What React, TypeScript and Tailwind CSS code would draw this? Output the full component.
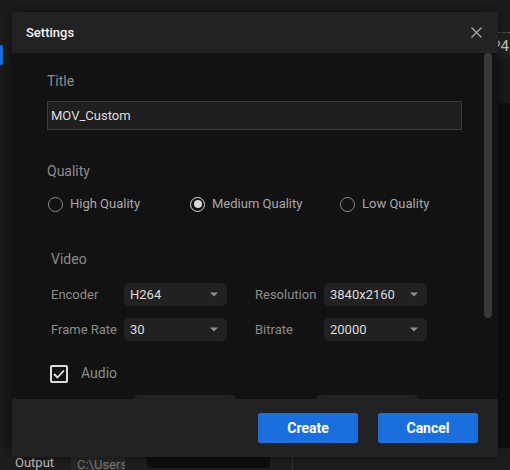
import React from 'react';

const font = { fontFamily: 'Roboto, "Liberation Sans", sans-serif' };

function Select({ value }: { value: string }) {
  return (
    <div className="flex h-[23px] w-[103px] items-center justify-between rounded-[5px] bg-[#212121] pl-[6px] pr-[9px]">
      <span className="text-[13px] text-[#dcdcdc]">{value}</span>
      <svg width="8" height="5" viewBox="0 0 8 5">
        <path d="M0 0.5 L8 0.5 L4 4.5 Z" fill="#8e8e8e" />
      </svg>
    </div>
  );
}

function Radio({ label, checked }: { label: string; checked?: boolean }) {
  return (
    <div className="flex items-center gap-[7px]">
      <span
        className={`flex h-[15px] w-[15px] items-center justify-center rounded-full border-[1.5px] ${
          checked ? 'border-[#d8d8d8]' : 'border-[#8a8a8a]'
        }`}
      >
        {checked && <span className="h-[8px] w-[8px] rounded-full bg-[#d8d8d8]" />}
      </span>
      <span className="text-[13px] text-[#a8a8a8]">{label}</span>
    </div>
  );
}

function Field({ label, value, labelW }: { label: string; value: string; labelW: string }) {
  return (
    <div className="flex items-center">
      <span className={`${labelW} text-[13px] text-[#8c8c8c]`}>{label}</span>
      <Select value={value} />
    </div>
  );
}

export default function App() {
  return (
    <div className="relative h-[470px] w-[510px] overflow-hidden bg-[#1c1c1c]" style={font}>
      {/* background app */}
      <div className="flex h-full flex-col">
        <div className="flex h-[448px]">
          <div className="flex w-[12px] flex-col">
            <div className="h-[45px]" />
            <div className="h-[20px] w-[3px] rounded-r-[2px] bg-[#1a6fdf]" />
            <div className="flex-1 bg-[#1a1a1a]" />
          </div>
          <div className="flex-1" />
          <div className="flex w-[12px] flex-col">
            <div className="h-[32px]" />
            <div className="flex h-[25px] justify-end border-t border-dashed border-[#555] bg-[#222] pr-[1px] pt-[6px] text-[15px] leading-none whitespace-nowrap text-[#c8c8c8]">
              MP4
            </div>
            <div className="h-[46px] bg-[#1a1a1a]" />
            <div className="flex-1 bg-[#0f0f0f]" />
          </div>
        </div>
        <div className="flex h-[22px] items-end bg-[#1e1e1e] text-[13px]">
          <span className="ml-[15px] mb-[-2px] w-[56px] text-[#c4c4c4]">Output</span>
          <div className="h-[13px] w-[54px] overflow-hidden whitespace-nowrap bg-[#282828] pl-[6px] leading-[15px] text-[#7e7e7e]">
            C:\Users
          </div>
          <div className="ml-[22px] mb-[2px] h-[11px] w-[123px] rounded-b-[4px] bg-[#0e0e0e]" />
          <div className="ml-[22px] h-[13px] w-px bg-[#333]" />
        </div>
      </div>

      {/* dialog */}
      <div className="absolute left-[12px] top-[12px] flex w-[486px] flex-col shadow-[0_0_12px_rgba(0,0,0,0.5)]">
        <div className="flex h-[41px] items-center justify-between bg-[#222] pl-[14px] pr-[16px]">
          <span className="text-[13px] font-medium text-[#f2f2f2]">Settings</span>
          <svg width="11" height="11" viewBox="0 0 11 11">
            <path d="M0.5 0.5 L10.5 10.5 M10.5 0.5 L0.5 10.5" stroke="#a8a8a8" strokeWidth="1.3" />
          </svg>
        </div>

        <div className="relative h-[346px] overflow-hidden bg-[#121212] pl-[35px]">
          <div className="absolute right-[6px] top-0 h-[265px] w-[8px] rounded-full bg-[#383838]" />

          <div className="pt-[18px] text-[14px] leading-[20px] text-[#8c8c8c]">Title</div>
          <div className="mt-[10px] flex h-[29px] w-[415px] items-center border border-[#3a3a3a] bg-[#1f1f1f] pl-[3px] text-[13px] text-[#dedede]">
            MOV_Custom
          </div>

          <div className="mt-[31px] text-[14px] leading-[20px] text-[#8c8c8c]">Quality</div>
          <div className="mt-[13px] flex h-[20px] items-center pl-[1px]">
            <div className="w-[142px]">
              <Radio label="High Quality" />
            </div>
            <div className="w-[150px]">
              <Radio label="Medium Quality" checked />
            </div>
            <Radio label="Low Quality" />
          </div>

          <div className="mt-[35px] pl-[4px] text-[14px] leading-[20px] text-[#8c8c8c]">Video</div>
          <div className="mt-[14px] flex flex-col gap-[12px] pl-[4px]">
            <div className="flex">
              <Field label="Encoder" value="H264" labelW="w-[73px]" />
              <div className="ml-[28px]">
                <Field label="Resolution" value="3840x2160" labelW="w-[69px]" />
              </div>
            </div>
            <div className="flex">
              <Field label="Frame Rate" value="30" labelW="w-[73px]" />
              <div className="ml-[28px]">
                <Field label="Bitrate" value="20000" labelW="w-[69px]" />
              </div>
            </div>
          </div>

          <div className="mt-[24px] flex h-[18px] items-center pl-[3px]">
            <span className="flex h-[18px] w-[18px] items-center justify-center rounded-[2px] border-2 border-[#dcdcdc]">
              <svg width="12" height="10" viewBox="0 0 12 10">
                <path d="M1 5 L4.5 8.5 L11 1.5" stroke="#e6e6e6" strokeWidth="1.8" fill="none" />
              </svg>
            </span>
            <span className="ml-[13px] mt-[-1px] text-[14px] text-[#8c8c8c]">Audio</span>
          </div>

          <div className="mt-[12px] flex pl-[86px]">
            <div className="h-[23px] w-[103px] rounded-[5px] bg-[#212121]" />
            <div className="ml-[80px] h-[23px] w-[103px] rounded-[5px] bg-[#212121]" />
          </div>
        </div>

        <div className="flex h-[58px] items-center justify-end gap-[20px] bg-[#222] pr-[20px]">
          <button className="h-[30px] w-[100px] rounded-[3px] bg-[#1a6fdf] text-[14px] font-bold text-white">
            Create
          </button>
          <button className="h-[30px] w-[100px] rounded-[3px] bg-[#1a6fdf] text-[14px] font-bold text-white">
            Cancel
          </button>
        </div>
      </div>
    </div>
  );
}
